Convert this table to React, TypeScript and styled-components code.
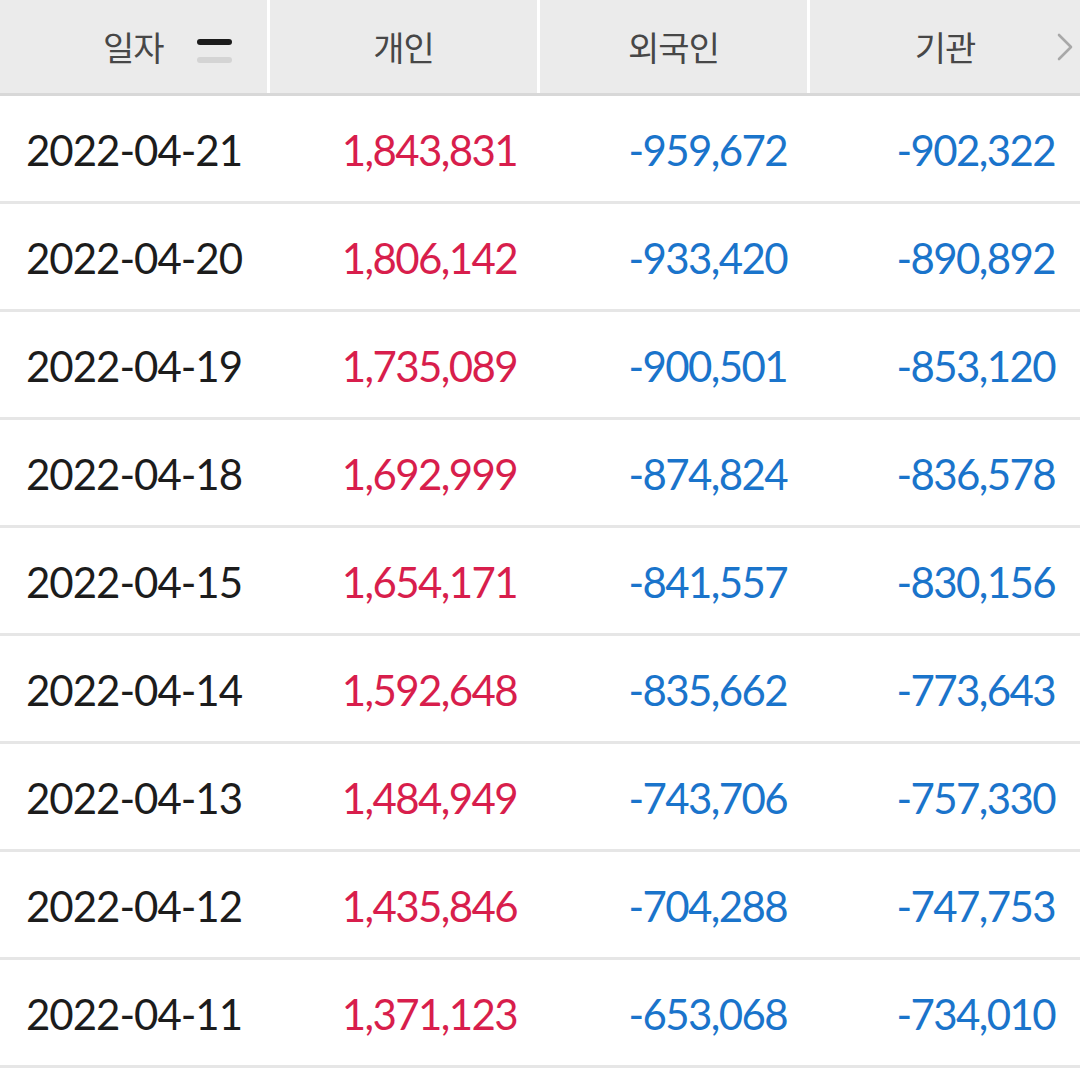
import React from "react";
import styled, { createGlobalStyle } from "styled-components";

const GlobalStyle = createGlobalStyle`
  html, body {
    margin: 0;
    padding: 0;
    background: #ffffff;
  }
  body {
    font-family: "Lato", "Noto Sans CJK KR", sans-serif;
  }
`;

type Row = { date: string; person: string; foreign: string; inst: string };

const rows: Row[] = [
  { date: "2022-04-21", person: "1,843,831", foreign: "-959,672", inst: "-902,322" },
  { date: "2022-04-20", person: "1,806,142", foreign: "-933,420", inst: "-890,892" },
  { date: "2022-04-19", person: "1,735,089", foreign: "-900,501", inst: "-853,120" },
  { date: "2022-04-18", person: "1,692,999", foreign: "-874,824", inst: "-836,578" },
  { date: "2022-04-15", person: "1,654,171", foreign: "-841,557", inst: "-830,156" },
  { date: "2022-04-14", person: "1,592,648", foreign: "-835,662", inst: "-773,643" },
  { date: "2022-04-13", person: "1,484,949", foreign: "-743,706", inst: "-757,330" },
  { date: "2022-04-12", person: "1,435,846", foreign: "-704,288", inst: "-747,753" },
  { date: "2022-04-11", person: "1,371,123", foreign: "-653,068", inst: "-734,010" },
];

const Table = styled.div`
  width: 1080px;
  display: flex;
  flex-direction: column;
`;

const HeaderRow = styled.div`
  display: grid;
  grid-template-columns: repeat(4, 270px);
  height: 93px;
  background: #ebebeb;
  border-bottom: 3px solid #d8d8d8;
`;

const HeaderCell = styled.div<{ $first?: boolean; $last?: boolean }>`
  position: relative;
  display: flex;
  align-items: center;
  justify-content: ${(p) => (p.$first ? "flex-start" : "center")};
  padding-left: ${(p) => (p.$first ? "103px" : "0")};
  border-right: ${(p) => (p.$last ? "none" : "3px solid #ffffff")};
  font-family: "Noto Sans CJK KR", "Noto Sans", sans-serif;
  font-size: 34px;
  font-weight: 400;
  color: #474747;
  letter-spacing: -1px;
`;

const SortIcon = styled.span`
  display: flex;
  flex-direction: column;
  gap: 12px;
  margin-left: 33px;
  margin-top: 9px;
`;

const SortBar = styled.span<{ $active?: boolean }>`
  display: block;
  width: 35px;
  height: 6px;
  border-radius: 3px;
  background: ${(p) => (p.$active ? "#1c1c1c" : "#d4d4d4")};
`;

const Chevron = styled.svg`
  position: absolute;
  right: 6px;
  top: 33px;
`;

const DataRow = styled.div`
  display: grid;
  grid-template-columns: repeat(4, 270px);
  height: 105px;
  border-bottom: 3px solid #e6e6e6;
  align-items: center;
`;

const DateCell = styled.div`
  padding-left: 26px;
  font-size: 42px;
  letter-spacing: -1px;
  color: #1c1c1c;
  padding-top: 2px;
`;

const NumCell = styled.div<{ $tone: "up" | "down"; $pr: number }>`
  text-align: right;
  padding-right: ${(p) => p.$pr}px;
  font-size: 42px;
  letter-spacing: -1.6px;
  color: ${(p) => (p.$tone === "up" ? "#d81e4c" : "#1a74cb")};
  padding-top: 2px;
`;

export default function App() {
  return (
    <>
      <GlobalStyle />
      <Table>
        <HeaderRow>
          <HeaderCell $first>
            일자
            <SortIcon>
              <SortBar $active />
              <SortBar />
            </SortIcon>
          </HeaderCell>
          <HeaderCell>개인</HeaderCell>
          <HeaderCell>외국인</HeaderCell>
          <HeaderCell $last>
            기관
            <Chevron width="18" height="28" viewBox="0 0 18 28" fill="none">
              <path d="M3 2 L15 14 L3 26" stroke="#a8a8a8" strokeWidth="2.6" strokeLinecap="round" strokeLinejoin="round" />
            </Chevron>
          </HeaderCell>
        </HeaderRow>
        {rows.map((r) => (
          <DataRow key={r.date}>
            <DateCell>{r.date}</DateCell>
            <NumCell $tone="up" $pr={23}>{r.person}</NumCell>
            <NumCell $tone="down" $pr={23}>{r.foreign}</NumCell>
            <NumCell $tone="down" $pr={25}>{r.inst}</NumCell>
          </DataRow>
        ))}
      </Table>
    </>
  );
}
